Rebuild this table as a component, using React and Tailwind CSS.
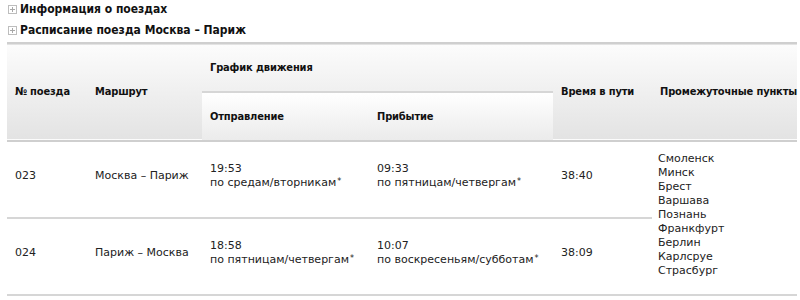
import React from "react";

const trains = [
  {
    num: "023",
    route: "Москва – Париж",
    dep: "19:53",
    depDays: "по средам/вторникам",
    arr: "09:33",
    arrDays: "по пятницам/четвергам",
    time: "38:40",
  },
  {
    num: "024",
    route: "Париж – Москва",
    dep: "18:58",
    depDays: "по пятницам/четвергам",
    arr: "10:07",
    arrDays: "по воскресеньям/субботам",
    time: "38:09",
  },
];

const stops = [
  "Смоленск",
  "Минск",
  "Брест",
  "Варшава",
  "Познань",
  "Франкфурт",
  "Берлин",
  "Карлсруе",
  "Страсбург",
];

const boldFont = { fontFamily: "'DejaVu Sans Condensed', 'DejaVu Sans', Verdana, sans-serif" };

function PlusBox() {
  return (
    <svg width="9" height="9" viewBox="0 0 9 9" className="shrink-0">
      <rect x="0.5" y="0.5" width="8" height="8" fill="#fff" stroke="#bdbdbd" />
      <path d="M2 4.5h5M4.5 2v5" stroke="#a8a8a8" strokeWidth="1" />
    </svg>
  );
}

function Section({ title, className }) {
  return (
    <div className={"flex items-center gap-[3px] pl-[8px] " + className}>
      <PlusBox />
      <span className="text-[12px] font-bold text-[#111]" style={boldFont}>
        {title}
      </span>
    </div>
  );
}

function Days({ children }) {
  return (
    <>
      {children}
      <span className="relative -top-[2px] ml-[1px] text-[8px] leading-none">*</span>
    </>
  );
}

export default function App() {
  return (
    <div
      className="w-[800px] h-[300px] bg-white overflow-hidden text-[#222]"
      style={{ fontFamily: "'DejaVu Sans', Verdana, sans-serif" }}
    >
      <Section title="Информация о поездах" className="h-[18px]" />
      <Section title="Расписание поезда Москва – Париж" className="h-[24px]" />

      {/* Schedule table */}
      <table className="ml-[7px] w-[790px] border-collapse table-fixed text-[11px] leading-[14px]">
        <colgroup>
          <col className="w-[80px]" />
          <col className="w-[115px]" />
          <col className="w-[167px]" />
          <col className="w-[184px]" />
          <col className="w-[99px]" />
          <col className="w-[145px]" />
        </colgroup>
        <thead
          className="bg-gradient-to-b from-[#fcfcfc] to-[#e3e3e3] border-t-2 border-b-2 border-[#cfcfcf] text-left font-bold text-[#111] whitespace-nowrap tracking-[-0.15px]"
          style={boldFont}
        >
          <tr className="h-[49px]">
            <th rowSpan={2} className="pl-[8px] align-middle">
              № поезда
            </th>
            <th rowSpan={2} className="pl-[8px] align-middle">
              Маршрут
            </th>
            <th colSpan={2} className="pl-[8px] align-middle">
              График движения
            </th>
            <th rowSpan={2} className="pl-[8px] align-middle">
              Время в пути
            </th>
            <th rowSpan={2} className="pl-[8px] align-middle">
              Промежуточные пункты
            </th>
          </tr>
          <tr className="h-[49px]">
            <th className="pl-[8px] align-middle border-t-2 border-[#d6d6d6] bg-gradient-to-b from-white to-[#ebebeb]">
              Отправление
            </th>
            <th className="pl-[8px] align-middle border-t-2 border-[#d6d6d6] bg-gradient-to-b from-white to-[#ebebeb]">
              Прибытие
            </th>
          </tr>
        </thead>
        <tbody>
          {trains.map((t, i) => (
            <tr key={t.num} className="h-[77px] border-b-2 border-[#d6d6d6]">
              <td className="pl-[8px] pb-2 align-middle">{t.num}</td>
              <td className="pl-[8px] pb-2 align-middle">{t.route}</td>
              <td className="pl-[8px] pb-2 align-middle">
                {t.dep}
                <br />
                <Days>{t.depDays}</Days>
              </td>
              <td className="pl-[8px] pb-2 align-middle">
                {t.arr}
                <br />
                <Days>{t.arrDays}</Days>
              </td>
              <td className="pl-[8px] pb-2 align-middle">{t.time}</td>
              {i === 0 && (
                <td rowSpan={2} className="pl-[6px] pb-[6px] align-middle bg-white">
                  {stops.map((s) => (
                    <div key={s}>{s}</div>
                  ))}
                </td>
              )}
            </tr>
          ))}
        </tbody>
      </table>
    </div>
  );
}
